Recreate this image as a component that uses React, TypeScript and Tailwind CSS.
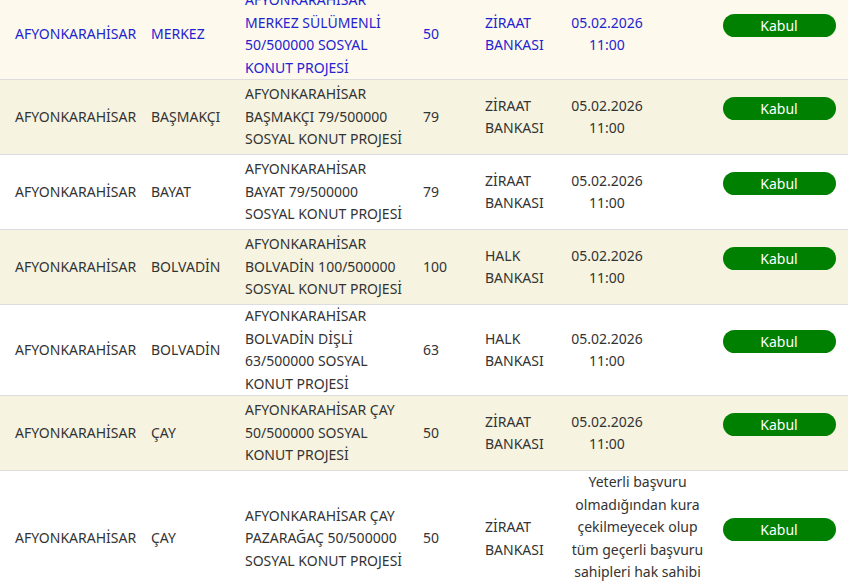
import React from "react";

interface Row {
    city: string;
    district: string;
    project: string[];
    count: string;
    bank: string[];
    date: string[];
    note?: boolean;
    bg: string;
    highlight?: boolean;
}

const rows: Row[] = [
    {
        city: "AFYONKARAHİSAR",
        district: "MERKEZ",
        project: ["AFYONKARAHİSAR", "MERKEZ SÜLÜMENLİ", "50/500000 SOSYAL", "KONUT PROJESİ"],
        count: "50",
        bank: ["ZİRAAT", "BANKASI"],
        date: ["05.02.2026", "11:00"],
        bg: "bg-[#fdf9ec]",
        highlight: true,
    },
    {
        city: "AFYONKARAHİSAR",
        district: "BAŞMAKÇI",
        project: ["AFYONKARAHİSAR", "BAŞMAKÇI 79/500000", "SOSYAL KONUT PROJESİ"],
        count: "79",
        bank: ["ZİRAAT", "BANKASI"],
        date: ["05.02.2026", "11:00"],
        bg: "bg-[#f6f3e1]",
    },
    {
        city: "AFYONKARAHİSAR",
        district: "BAYAT",
        project: ["AFYONKARAHİSAR", "BAYAT 79/500000", "SOSYAL KONUT PROJESİ"],
        count: "79",
        bank: ["ZİRAAT", "BANKASI"],
        date: ["05.02.2026", "11:00"],
        bg: "bg-white",
    },
    {
        city: "AFYONKARAHİSAR",
        district: "BOLVADİN",
        project: ["AFYONKARAHİSAR", "BOLVADİN 100/500000", "SOSYAL KONUT PROJESİ"],
        count: "100",
        bank: ["HALK", "BANKASI"],
        date: ["05.02.2026", "11:00"],
        bg: "bg-[#f6f3e1]",
    },
    {
        city: "AFYONKARAHİSAR",
        district: "BOLVADİN",
        project: ["AFYONKARAHİSAR", "BOLVADİN DİŞLİ", "63/500000 SOSYAL", "KONUT PROJESİ"],
        count: "63",
        bank: ["HALK", "BANKASI"],
        date: ["05.02.2026", "11:00"],
        bg: "bg-white",
    },
    {
        city: "AFYONKARAHİSAR",
        district: "ÇAY",
        project: ["AFYONKARAHİSAR ÇAY", "50/500000 SOSYAL", "KONUT PROJESİ"],
        count: "50",
        bank: ["ZİRAAT", "BANKASI"],
        date: ["05.02.2026", "11:00"],
        bg: "bg-[#f6f3e1]",
    },
    {
        city: "AFYONKARAHİSAR",
        district: "ÇAY",
        project: ["AFYONKARAHİSAR ÇAY", "PAZARAĞAÇ 50/500000", "SOSYAL KONUT PROJESİ"],
        count: "50",
        bank: ["ZİRAAT", "BANKASI"],
        date: [
            "Yeterli başvuru",
            "olmadığından kura",
            "çekilmeyecek olup",
            "tüm geçerli başvuru",
            "sahipleri hak sahibi",
            "olacaktır.",
        ],
        note: true,
        bg: "bg-white",
    },
];

const Lines: React.FC<{ lines: string[] }> = ({ lines }) => (
    <div>
        {lines.map((l, i) => (
            <div key={i} className="whitespace-nowrap">
                {l}
            </div>
        ))}
    </div>
);

export default function App() {
    return (
        <div
            className="w-[848px] h-[586px] overflow-hidden bg-white text-[14px] leading-[22.5px]"
            style={{ fontFamily: '"Noto Sans", "Open Sans", sans-serif' }}
        >
            <div className="-mt-[11px]">
                {rows.map((r, i) => (
                    <div
                        key={i}
                        className={`grid grid-cols-[15px_136px_94px_178px_62px_80px_145px_1fr] items-center min-h-[75px] border-b border-[#dddddd] ${r.bg} ${
                            r.highlight ? "text-[#2323cf]" : "text-[#333333]"
                        }`}
                    >
                        <div />
                        <div className="whitespace-nowrap">{r.city}</div>
                        <div className="whitespace-nowrap">{r.district}</div>
                        <Lines lines={r.project} />
                        <div>{r.count}</div>
                        <Lines lines={r.bank} />
                        {r.note ? (
                            <div className="text-center">
                                <Lines lines={r.date} />
                            </div>
                        ) : (
                            <div className="w-[84px] text-center">
                                <Lines lines={r.date} />
                            </div>
                        )}
                        <div className="flex flex-col items-center">
                            <button className="w-[113px] h-[23px] rounded-full bg-[#008000] text-white text-[14px] leading-[23px]">
                                Kabul
                            </button>
                            <div className="h-[18px]" />
                        </div>
                    </div>
                ))}
            </div>
        </div>
    );
}
